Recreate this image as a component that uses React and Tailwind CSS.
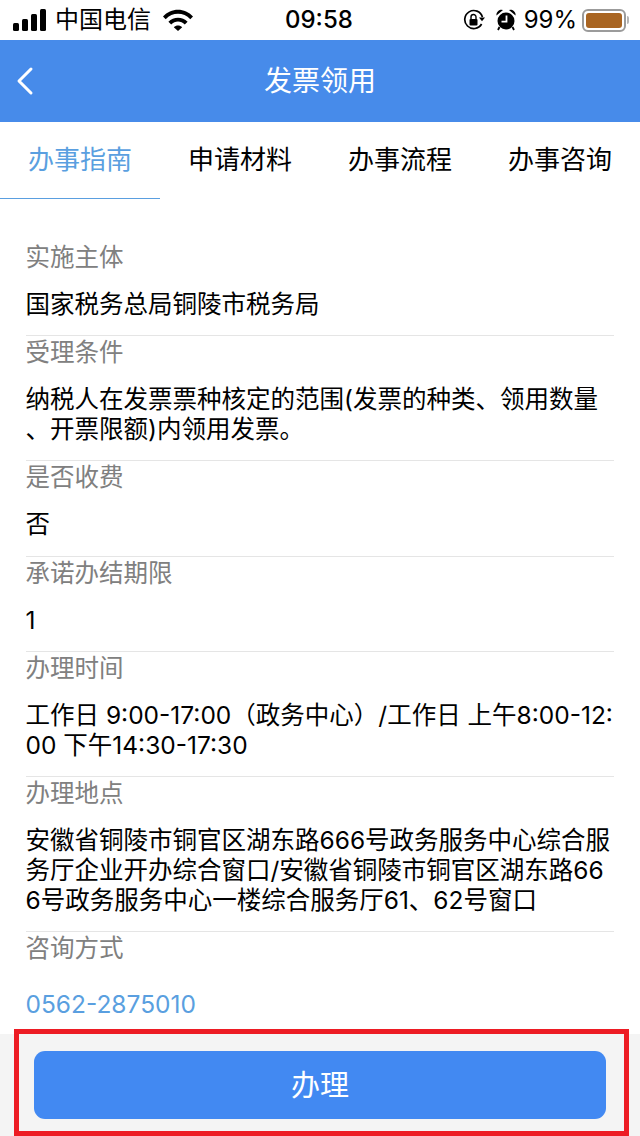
import { ChevronLeft } from 'lucide-react';

const tabs = ['办事指南', '申请材料', '办事流程', '办事咨询'];

const items = [
  { label: '实施主体', value: '国家税务总局铜陵市税务局' },
  { label: '受理条件', value: '纳税人在发票票种核定的范围(发票的种类、领用数量、开票限额)内领用发票。' },
  { label: '是否收费', value: '否' },
  { label: '承诺办结期限', value: '1' },
  { label: '办理时间', value: '工作日 9:00-17:00（政务中心）/工作日 上午8:00-12:00 下午14:30-17:30' },
  {
    label: '办理地点',
    value: '安徽省铜陵市铜官区湖东路666号政务服务中心综合服务厅企业开办综合窗口/安徽省铜陵市铜官区湖东路666号政务服务中心一楼综合服务厅61、62号窗口',
  },
];

function StatusBar() {
  return (
    <div className="h-10 bg-white flex items-center text-black text-[24px] relative">
      <svg width="34" height="22" viewBox="0 0 34 22" className="ml-[13px]">
        <rect x="0" y="14" width="6" height="8" rx="1.5" fill="#000" />
        <rect x="9" y="10" width="6" height="12" rx="1.5" fill="#000" />
        <rect x="18" y="5" width="6" height="17" rx="1.5" fill="#000" />
        <rect x="27" y="0" width="6" height="22" rx="1.5" fill="#000" />
      </svg>
      <span className="ml-[8px] leading-none">中国电信</span>
      <svg width="30" height="22" viewBox="0 0 30 22" className="ml-[12px]">
        <path d="M0 7.5C8-1.5 22-1.5 30 7.5L27.3 10.3C20.5 3 9.5 3 2.7 10.3Z" fill="#000" />
        <path d="M5.4 12.8C10.5 7.3 19.5 7.3 24.6 12.8L21.8 15.6C18 11.6 12 11.6 8.2 15.6Z" fill="#000" />
        <path d="M10.8 18.2C13 15.9 17 15.9 19.2 18.2L15 22Z" fill="#000" />
      </svg>
      <span className="absolute left-[285px] font-medium leading-none">09:58</span>
      <div className="ml-auto flex items-center pr-[11px]">
        <svg width="22" height="22" viewBox="0 0 22 22">
          <path d="M18.6 15A9 9 0 1 1 19.4 8" fill="none" stroke="#000" strokeWidth="1.7" />
          <path d="M16 8.5h6l-3 3.8Z" fill="#000" />
          <rect x="6.5" y="10" width="8" height="6.5" rx="1" fill="#000" />
          <path d="M8 10V8a2.5 2.5 0 0 1 5 0v2" fill="none" stroke="#000" strokeWidth="1.4" />
        </svg>
        <svg width="20" height="22" viewBox="0 0 20 22" className="ml-[11px]">
          <circle cx="10" cy="12" r="8.5" fill="#000" />
          <path d="M0.5 6.5A5 5 0 0 1 7 1ZM19.5 6.5A5 5 0 0 0 13 1Z" fill="#000" />
          <path d="M3.5 18 2 21M16.5 18l1.5 3" stroke="#000" strokeWidth="1.8" />
          <path d="M10.5 6.5v6.2H5.5" fill="none" stroke="#fff" strokeWidth="1.8" />
        </svg>
        <span className="ml-[8px] leading-none">99%</span>
        <div className="ml-[5px] w-[44px] h-[23px] border-2 border-[#9b9b9b] rounded-[6px] p-[2px]">
          <div className="w-full h-full bg-[#a96522] rounded-[3px]" />
        </div>
        <div className="ml-[1px] w-[2px] h-[8px] bg-[#b5b5b5] rounded-r-sm" />
      </div>
    </div>
  );
}

function Item({ label, value }) {
  return (
    <div className="border-b border-[#e5e5e5] pb-[16.2px]">
      <div className="h-[33px] leading-[33px] text-[#808080]">{label}</div>
      <div className="mt-[15px] leading-[30px] text-black break-all [line-break:anywhere]">{value}</div>
    </div>
  );
}

export default function App() {
  return (
    <div
      className="relative w-[640px] h-[1136px] flex flex-col bg-white overflow-hidden text-[24.5px]"
      style={{ fontFamily: 'Inter, "Noto Sans CJK SC", sans-serif' }}
    >
      <StatusBar />

      <div className="h-[82px] bg-[#478bea] flex items-center justify-center relative">
        <ChevronLeft className="absolute left-px top-[17px] text-white" size={48} strokeWidth={1.5} />
        <span className="text-white text-[28px]">发票领用</span>
      </div>

      <div className="flex h-[77px] bg-white">
        {tabs.map((tab, i) => (
          <div
            key={tab}
            className={
              'w-40 flex items-center justify-center text-[26px] pb-[2px] ' +
              (i === 0 ? 'text-[#5a9fe0] border-b border-[#5a9fe0]' : 'text-black')
            }
          >
            {tab}
          </div>
        ))}
      </div>

      <div className="flex-1 pl-[25.5px] pr-[26px] pt-[42px] overflow-hidden">
        {items.map(item => (
          <Item key={item.label} {...item} />
        ))}
        <div className="h-[33px] leading-[33px] text-[#808080]">咨询方式</div>
        <div className="mt-[24px] leading-[30px] text-[#5a9fe0]">0562-2875010</div>
      </div>

      <div className="h-[102px] bg-[#f4f4f4] flex items-start justify-center pt-[17px]">
        <button className="w-[572px] h-[68px] rounded-[11px] bg-[#4289f2] text-white text-[29px] pt-[2px]">办理</button>
      </div>

      <div className="absolute left-[14px] top-[1029px] w-[615px] h-[107px] border-[5px] border-[#ed1c24] pointer-events-none" />
    </div>
  );
}
